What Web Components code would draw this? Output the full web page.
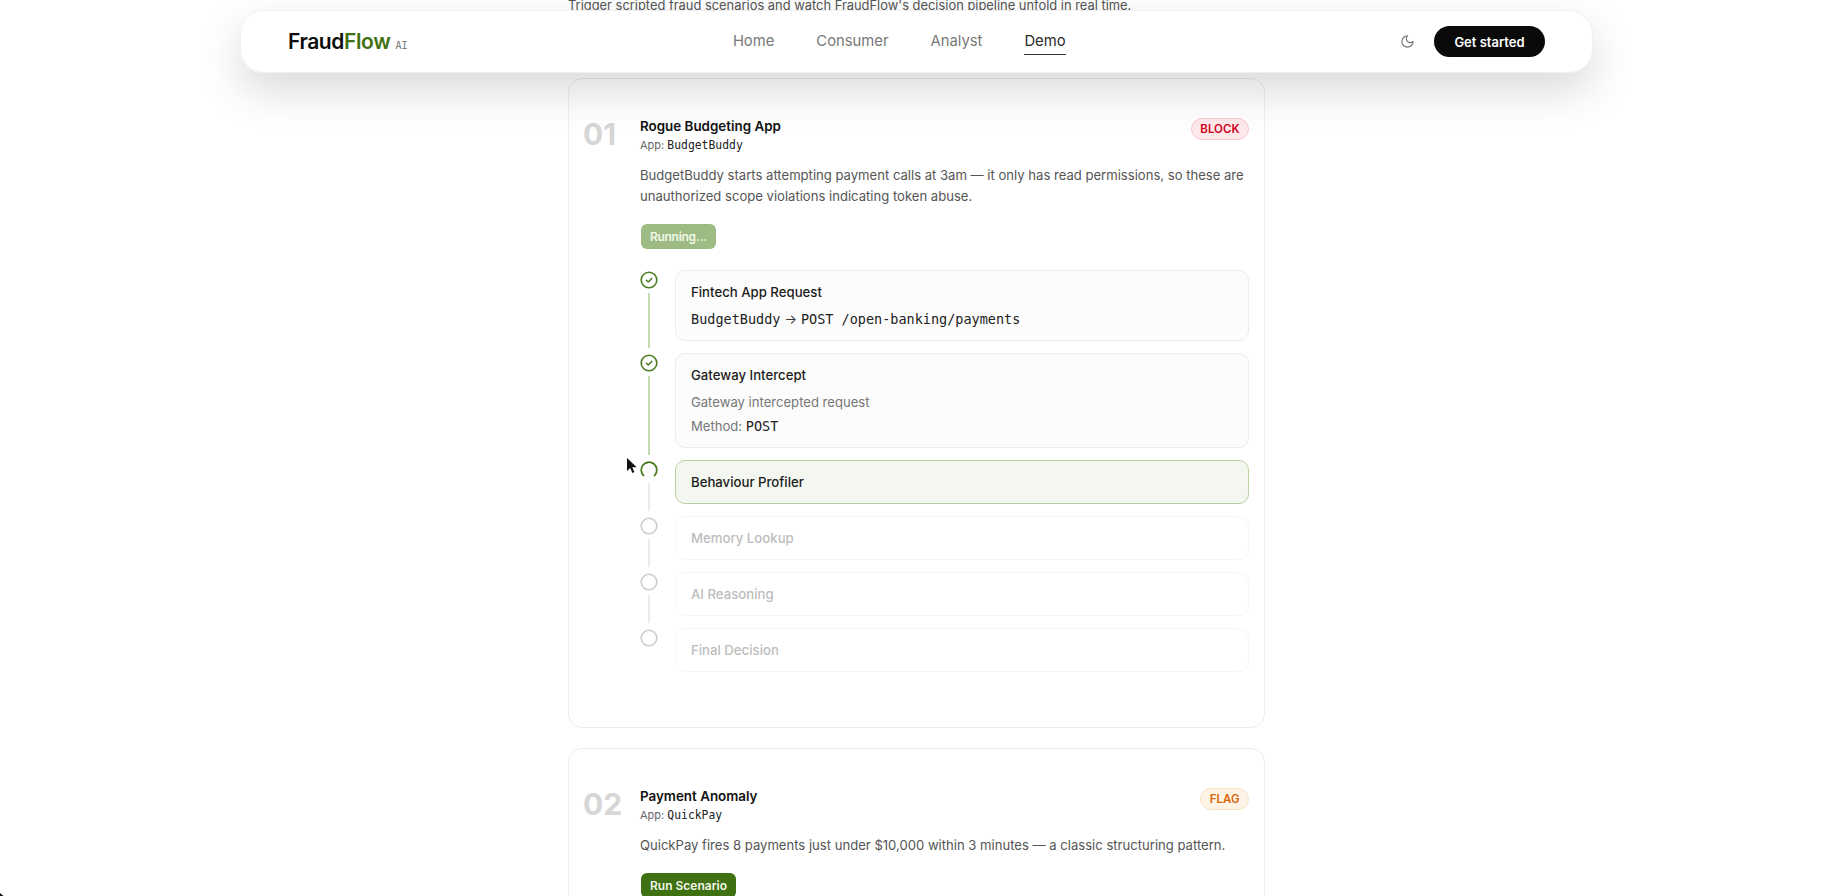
<!DOCTYPE html>
<html lang="en">
<head>
<meta charset="utf-8">
<title>FraudFlow AI</title>
<style>
    html, body {
        margin: 0;
        height: 896px;
        overflow: hidden;
        background: #fff;
    }

    body {
        font-family: Inter, "Liberation Sans", sans-serif;
        color: #111;
        position: relative;
    }
</style>
</head>
<body>
<ff-nav></ff-nav>

<ff-page>
    <span slot="intro">Trigger scripted fraud scenarios and watch FraudFlow's decision pipeline unfold in real time.</span>

    <ff-scenario num="01" name="Rogue Budgeting App" app="BudgetBuddy" verdict="block" tail="55">
        <span slot="desc">BudgetBuddy starts attempting payment calls at 3am — it only has read permissions, so these are unauthorized scope violations indicating token abuse.</span>
        <ff-button slot="action" state="running">Running…</ff-button>
        <ff-step heading="Fintech App Request" state="done" line="on">
            <div class="route"><ff-code>BudgetBuddy</ff-code><span>→</span><ff-code>POST /open-banking/payments</ff-code></div>
        </ff-step>
        <ff-step heading="Gateway Intercept" state="done" line="on">
            <div class="muted">Gateway intercepted request</div>
            <div class="muted last">Method: <ff-code>POST</ff-code></div>
        </ff-step>
        <ff-step heading="Behaviour Profiler" state="active" line="off"></ff-step>
        <ff-step heading="Memory Lookup" state="pending" line="off"></ff-step>
        <ff-step heading="AI Reasoning" state="pending" line="off"></ff-step>
        <ff-step heading="Final Decision" state="pending"></ff-step>
    </ff-scenario>

    <ff-scenario num="02" name="Payment Anomaly" app="QuickPay" verdict="flag">
        <span slot="desc">QuickPay fires 8 payments just under $10,000 within 3 minutes — a classic structuring pattern.</span>
        <ff-button slot="action">Run Scenario</ff-button>
    </ff-scenario>
</ff-page>

<ff-cursor></ff-cursor>

<script>
const navTemplate = document.createElement('template')
navTemplate.innerHTML = `
    <style>
        :host {
            display: flex;
            position: absolute;
            z-index: 5;
            top: 10px;
            left: 240px;
            width: 1353px;
            height: 63px;
            box-sizing: border-box;
            padding: 0 47px;
            align-items: center;
            justify-content: space-between;
            background: rgba(255, 255, 255, 0.96);
            border: 1px solid #f0f0f0;
            border-radius: 24px;
            box-shadow: 0 18px 44px rgba(0, 0, 0, 0.15);
        }

        .logo {
            display: flex;
            align-items: baseline;
            gap: 5px;
            font-size: 21px;
            font-weight: 600;
            letter-spacing: -0.4px;
            color: #0c0c0c;
        }

        .logo b {
            font-weight: 600;
            color: #3f7012;
        }

        .logo small {
            font: 400 10px "DejaVu Sans Mono", monospace;
            letter-spacing: 0;
            color: #777;
        }

        nav {
            display: flex;
            gap: 42px;
            margin-left: -9px;
            font-size: 14.8px;
            color: #777;
        }

        nav a {
            padding: 3px 0 4px;
            border-bottom: 1px solid transparent;
        }

        nav a.on {
            color: #2a2a2a;
            border-bottom-color: #333;
        }

        .right {
            display: flex;
            align-items: center;
            gap: 19px;
        }

        svg {
            display: block;
        }

        button {
            width: 111px;
            height: 31px;
            border: 0;
            border-radius: 16px;
            background: #0a0a0a;
            color: #fff;
            font: 600 13px Inter, sans-serif;
        }
    </style>
    <div class="logo"><span>Fraud<b>Flow</b></span><small>AI</small></div>
    <nav>
        <a>Home</a>
        <a>Consumer</a>
        <a>Analyst</a>
        <a class="on">Demo</a>
    </nav>
    <div class="right">
        <svg width="15" height="15" viewBox="0 0 24 24" fill="none" stroke="#777" stroke-width="1.8" stroke-linecap="round" stroke-linejoin="round">
            <path d="M12 3a6 6 0 0 0 9 9 9 9 0 1 1-9-9Z"/>
        </svg>
        <button>Get started</button>
    </div>
`

const pageTemplate = document.createElement('template')
pageTemplate.innerHTML = `
    <style>
        :host {
            display: block;
            width: 697px;
            margin-left: 568px;
        }

        p {
            margin: -4px 0 62px;
            font-size: 12.9px;
            line-height: 20px;
            color: #555;
        }

        .list {
            display: flex;
            flex-direction: column;
            gap: 20px;
        }
    </style>
    <p><slot name="intro"></slot></p>
    <div class="list"><slot></slot></div>
`

const scenarioTemplate = document.createElement('template')
scenarioTemplate.innerHTML = `
    <style>
        :host {
            display: block;
            box-sizing: border-box;
            padding: 37px 15px 0 14px;
            border: 1px solid #ececec;
            border-radius: 14px;
            background: #fff;
        }

        .head {
            display: grid;
            grid-template-columns: 57px 1fr auto;
            align-items: start;
        }

        .num {
            font-size: 30px;
            font-weight: 700;
            line-height: 36px;
            color: #d6d6d6;
        }

        h3 {
            margin: 0;
            font-size: 13.4px;
            font-weight: 600;
            line-height: 20px;
            color: #111;
        }

        .app {
            font-size: 11px;
            line-height: 18px;
            color: #666;
        }

        .app span {
            font-family: "DejaVu Sans Mono", monospace;
            font-size: 11.4px;
            color: #222;
        }

        .badge {
            margin-top: 2px;
            padding: 0 8.5px;
            height: 20px;
            line-height: 20px;
            border-radius: 11px;
            border: 1px solid;
            font-size: 11.5px;
            font-weight: 600;
        }

        .block {
            color: #d0021b;
            background: #fde8ea;
            border-color: #f8c9ce;
        }

        .flag {
            color: #d9660a;
            background: #fef3e4;
            border-color: #fbe3c4;
        }

        .body {
            margin-left: 57px;
        }

        .desc {
            margin: 11px 0 0;
            font-size: 13.08px;
            line-height: 21px;
            color: #555;
        }

        .action {
            margin-top: 17px;
        }

        .steps {
            display: flex;
            flex-direction: column;
            gap: 12px;
            margin-top: 21px;
        }
    </style>
    <div class="head">
        <div class="num"></div>
        <div>
            <h3></h3>
            <div class="app">App: <span></span></div>
        </div>
        <div class="badge"></div>
    </div>
    <div class="body">
        <p class="desc"><slot name="desc"></slot></p>
        <div class="action"><slot name="action"></slot></div>
        <div class="steps"><slot></slot></div>
    </div>
`

const stepTemplate = document.createElement('template')
stepTemplate.innerHTML = `
    <style>
        :host {
            display: grid;
            grid-template-columns: 18px 1fr;
            column-gap: 17px;
            font-size: 13px;
        }

        .rail {
            display: flex;
            flex-direction: column;
            align-items: center;
            padding-top: 1px;
        }

        .rail svg {
            display: block;
            flex: none;
        }

        .line {
            flex: 1;
            width: 2px;
            margin: 4px 0 -7px;
            background: #ebebeb;
        }

        :host([line="on"]) .line {
            background: #c4dbb0;
        }

        :host(:not([line])) .line {
            display: none;
        }

        .box {
            box-sizing: border-box;
            padding: 12px 15px 9px;
            border: 1px solid #ececec;
            border-radius: 10px;
            background: #fcfcfc;
        }

        h4 {
            margin: 0;
            font-size: 13.2px;
            font-weight: 500;
            line-height: 18px;
            color: #1c1c1c;
        }

        .detail {
            margin-top: 7px;
            font-size: 13.1px;
            line-height: 23px;
            color: #333;
        }

        :host([state="active"]) .box {
            padding-bottom: 12px;
            background: #f4f7f0;
            border-color: #b9d0a0;
        }

        :host([state="pending"]) .box {
            padding-bottom: 12px;
            background: #fff;
            border-color: #f6f6f6;
        }

        :host([state="pending"]) h4 {
            color: #bdbdbd;
        }

        :host([state="active"]) .detail,
        :host([state="pending"]) .detail {
            display: none;
        }

        ::slotted(.muted) {
            color: #777;
        }

        ::slotted(.last) {
            margin-top: 1px;
        }

        ::slotted(.route) {
            display: flex;
            gap: 4px;
        }
    </style>
    <div class="rail">
        <span class="dot"></span>
        <div class="line"></div>
    </div>
    <div class="box">
        <h4></h4>
        <div class="detail"><slot></slot></div>
    </div>
`

const DOTS = {
    done: `<svg width="18" height="18" viewBox="0 0 18 18" fill="none">
        <circle cx="9" cy="9" r="7.8" stroke="#4a7c1f" stroke-width="1.6"/>
        <path d="M6.4 9.2l1.9 1.8 3.4-3.6" stroke="#4a7c1f" stroke-width="1.5" stroke-linecap="round" stroke-linejoin="round"/>
    </svg>`,
    active: `<svg width="18" height="18" viewBox="0 0 18 18" fill="none">
        <circle cx="9" cy="9" r="7.8" stroke="#4a7c1f" stroke-width="1.8" stroke-dasharray="38 11" transform="rotate(130 9 9)"/>
    </svg>`,
    pending: `<svg width="18" height="18" viewBox="0 0 18 18" fill="none">
        <circle cx="9" cy="9" r="7.8" stroke="#cccccc" stroke-width="1.6"/>
    </svg>`
}

customElements.define('ff-nav',
    class extends HTMLElement {
        constructor () {
            super()
            this.attachShadow({ mode: 'open' })
                .appendChild(navTemplate.content.cloneNode(true))
        }
    }
)

customElements.define('ff-page',
    class extends HTMLElement {
        constructor () {
            super()
            this.attachShadow({ mode: 'open' })
                .appendChild(pageTemplate.content.cloneNode(true))
        }
    }
)

customElements.define('ff-scenario',
    class extends HTMLElement {
        constructor () {
            super()
            this.attachShadow({ mode: 'open' })
                .appendChild(scenarioTemplate.content.cloneNode(true))
        }

        connectedCallback () {
            const root = this.shadowRoot
            root.querySelector('.num').textContent = this.getAttribute('num')
            root.querySelector('h3').textContent = this.getAttribute('name')
            root.querySelector('.app span').textContent = this.getAttribute('app')

            const verdict = this.getAttribute('verdict')
            const badge = root.querySelector('.badge')
            badge.textContent = verdict.toUpperCase()
            badge.classList.add(verdict)

            if (this.hasAttribute('tail')) {
                this.style.paddingBottom = this.getAttribute('tail') + 'px'
            }
        }
    }
)

customElements.define('ff-step',
    class extends HTMLElement {
        constructor () {
            super()
            this.attachShadow({ mode: 'open' })
                .appendChild(stepTemplate.content.cloneNode(true))
        }

        connectedCallback () {
            const root = this.shadowRoot
            root.querySelector('h4').textContent = this.getAttribute('heading')
            root.querySelector('.dot').innerHTML = DOTS[this.getAttribute('state')]
        }
    }
)

customElements.define('ff-button',
    class extends HTMLElement {
        constructor () {
            super()
            this.attachShadow({ mode: 'open' }).innerHTML = `
                <style>
                    :host {
                        display: inline-block;
                        padding: 0 9px;
                        height: 25px;
                        margin-left: 1px;
                        line-height: 25px;
                        border-radius: 6px;
                        background: #3f7012;
                        color: #f1f7e9;
                        font-size: 12px;
                        font-weight: 600;
                    }

                    :host([state="running"]) {
                        background: #9dbb82;
                        letter-spacing: -0.3px;
                    }
                </style>
                <slot></slot>
            `
        }
    }
)

customElements.define('ff-code',
    class extends HTMLElement {
        constructor () {
            super()
            this.attachShadow({ mode: 'open' }).innerHTML = `
                <style>
                    :host {
                        font-family: "DejaVu Sans Mono", monospace;
                        font-size: 13.5px;
                        color: #222;
                    }
                </style>
                <slot></slot>
            `
        }
    }
)

// the recording's pointer, plus the sliver of a second one in the corner
customElements.define('ff-cursor',
    class extends HTMLElement {
        constructor () {
            super()
            this.attachShadow({ mode: 'open' }).innerHTML = `
                <style>
                    svg {
                        position: absolute;
                        z-index: 6;
                    }

                    .main {
                        left: 626px;
                        top: 457px;
                    }

                    .corner {
                        left: 0;
                        top: 893px;
                    }
                </style>
                <svg class="main" width="12" height="17" viewBox="0 0 12 17">
                    <path d="M1 1v13l3.2-3 2.2 5 2-1-2.2-4.800h4.500z" fill="#111"/>
                </svg>
                <svg class="corner" width="4" height="3" viewBox="0 0 4 3">
                    <path d="M0 0l3.500 3H0z" fill="#111"/>
                </svg>
            `
        }
    }
)
</script>
</body>
</html>
